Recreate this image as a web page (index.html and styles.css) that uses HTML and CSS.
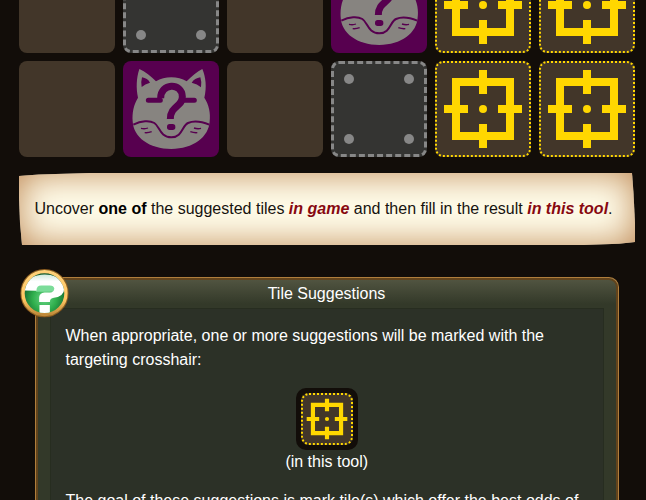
FILE: index.html
```
<!DOCTYPE html>
<html lang="en">
<head>
<meta charset="utf-8">
<title>Tile Suggestions</title>
<link rel="stylesheet" href="styles.css">
</head>
<body>
<svg class="defs" aria-hidden="true">
  <symbol id="crosshair" viewBox="0 0 96 96">
    <path fill="none" stroke="#ffd700" stroke-width="8" d="M21 21H75V75H21ZM48 9V33M48 63V87M9 48H33M63 48H87"/>
    <circle cx="48" cy="48" r="4" fill="#ffd700"/>
  </symbol>
  <symbol id="fox" viewBox="9 9 288 288">
    <path fill="#878480" d="M58 33C75 41 94 55 108 70C134 54 174 54 200 70C214 55 232 41 247 33C257 56 261 87 253 119C267 140 272 166 269 190C267 237 219 273 154 273C88 273 40 238 38 190C36 165 41 140 54 119C48 91 49 60 58 33Z"/>
    <path fill="#57004f" d="M66 58Q83 61 90 74Q75 78 65 87Q62 72 66 58ZM241 58Q224 61 215 74Q232 78 243 88Q246 73 241 58Z"/>
    <path fill="none" stroke="#57004f" stroke-width="15" stroke-linecap="round" d="M85 127H121M192 127H223"/>
    <path fill="none" stroke="#57004f" stroke-width="21" d="M122 121C121 75 186 72 187 116C188 146 151 143 151 183"/>
    <rect x="141" y="198" width="25" height="18" rx="8" fill="#57004f"/>
    <path fill="none" stroke="#57004f" stroke-width="6" d="M40 200C64 188 89 187 103 195C119 205 120 238 154 238C187 238 186 203 204 195C222 187 246 191 268 200"/>
    <path fill="none" stroke="#57004f" stroke-width="4" d="M63 211Q74 214 84 210M74 224Q85 225 95 221M222 210Q233 214 243 211M211 221Q222 225 232 224"/>
  </symbol>
</svg>

<main class="page">
  <div class="board">
    <div class="tile"></div>
    <div class="tile blocked"><i></i><i></i><i></i><i></i></div>
    <div class="tile"></div>
    <div class="tile fox"><svg><use href="#fox"/></svg></div>
    <div class="tile suggested"><svg><use href="#crosshair"/></svg></div>
    <div class="tile suggested"><svg><use href="#crosshair"/></svg></div>
    <div class="tile"></div>
    <div class="tile fox"><svg><use href="#fox"/></svg></div>
    <div class="tile"></div>
    <div class="tile blocked"><i></i><i></i><i></i><i></i></div>
    <div class="tile suggested"><svg><use href="#crosshair"/></svg></div>
    <div class="tile suggested"><svg><use href="#crosshair"/></svg></div>
  </div>

  <p class="parchment">Uncover <b>one of</b> the suggested tiles <em>in game</em> and then fill in the result <em>in this tool</em>.</p>

  <section class="panel">
    <svg class="badge" viewBox="29 26 146 146">
      <defs>
        <linearGradient id="ring" x1="0" y1="0" x2="0" y2="1">
          <stop offset="0" stop-color="#ffd078"/><stop offset=".65" stop-color="#ffc663"/><stop offset="1" stop-color="#c08a3a"/>
        </linearGradient>
        <radialGradient id="orb" cx=".5" cy=".62" r=".62">
          <stop offset="0" stop-color="#6ad688"/><stop offset=".45" stop-color="#2fae4c"/><stop offset="1" stop-color="#0b4a26"/>
        </radialGradient>
        <linearGradient id="gloss" x1="0" y1="0" x2="0" y2="1">
          <stop offset="0" stop-color="#cfe9dc"/><stop offset=".25" stop-color="#fff"/><stop offset="1" stop-color="#fff"/>
        </linearGradient>
        <clipPath id="disc"><circle cx="102" cy="98" r="59"/></clipPath>
      </defs>
      <circle cx="102" cy="98" r="70" fill="#0b4a26" stroke="#8d5d20" stroke-width="4"/>
      <circle cx="102" cy="98" r="64" fill="url(#orb)" stroke="url(#ring)" stroke-width="10"/>
      <g clip-path="url(#disc)">
        <path fill="#7bdc99" d="M77 73H132V94H77Z"/>
        <path fill="url(#gloss)" d="M40 90V72Q52 51 80 45Q112 39 136 49Q157 58 161 80Q162 107 130 112Q118 114 118 124H86V110Q87 98 102 96H118Q131 95 131 84Q130 75 118 75H92Q78 75 78 91Z"/>
        <path fill="#fff" d="M87 133H118V159H87Z"/>
      </g>
    </svg>
    <h2>Tile Suggestions</h2>
    <div class="content">
      <p>When appropriate, one or more suggestions will be marked with the targeting crosshair:</p>
      <figure>
        <div class="frame"><div class="mini suggested"><svg><use href="#crosshair"/></svg></div></div>
        <figcaption>(in this tool)</figcaption>
      </figure>
      <p>The goal of these suggestions is mark tile(s) which offer the best odds of</p>
    </div>
  </section>
</main>
</body>
</html>
```
FILE: styles.css
```
* { box-sizing: border-box; }
html, body { height: 100%; }
body {
  margin: 0;
  overflow: hidden;
  background: #120d09;
  color: #fff;
  font: 16px/24px "Liberation Sans", Arial, sans-serif;
}
.defs { position: absolute; width: 0; height: 0; }
.page { height: 500px; overflow: hidden; padding-left: 19px; }
.board {
  display: grid;
  grid-template-columns: repeat(6, 96px);
  gap: 8px;
  margin-top: -43px;
}
.tile {
  height: 96px;
  border-radius: 8px;
  background: #423629;
  overflow: hidden;
}
.tile svg { display: block; width: 96px; height: 96px; }
.fox { background: #57004f; }
.blocked {
  display: grid;
  grid-template-columns: 10px 10px;
  place-content: space-between;
  padding: 10px;
  border: 3px dashed #878787;
  background: #343432;
}
.blocked i { width: 10px; height: 10px; border-radius: 50%; background: #878787; }
.suggested { border: 2px dotted #ffd700; background: #423629; }
.tile.suggested svg { margin: -2px; }
.parchment {
  width: 616px;
  height: 72px;
  margin: 16px 0 0;
  padding: 24px 0 0 15.5px;
  white-space: nowrap;
  color: #17130f;
  background: #fffdeb;
  box-shadow: inset 0 0 36px #bd8550;
  clip-path: polygon(0 3px, 20px 1.5px, 70px 0, 613px 0, 614.5px 20px, 616px 50px, 616px 69px, 600px 70.8px, 565px 72px, 3px 72px, 1px 50px, 0 25px);
}
.parchment b { color: #000; }
.parchment em { color: #870810; font-weight: bold; }
.panel {
  position: relative;
  width: 584px;
  height: 300px;
  margin: 32px 0 0 16px;
  padding: 0 12px;
  border: 1px solid #b07e3c;
  border-bottom: 0;
  border-radius: 10px 10px 0 0;
  background: linear-gradient(#535642, #333929 26px, #333929);
  box-shadow: inset 0 0 0 2px #61431c;
}
.badge { position: absolute; left: -16.5px; top: -9.5px; width: 49px; height: 49px; }
.panel h2 {
  height: 30px;
  margin: 0;
  padding: 4px 1px 0 0;
  font-size: 16px;
  font-weight: normal;
  text-align: center;
}
.content {
  height: 270px;
  margin: 0 2px;
  padding: 15px 15px 0 14.5px;
  border: 1px solid #272d20;
  background: #2c3127;
}
.content p { margin: 0; }
figure {
  display: flex;
  flex-direction: column;
  align-items: center;
  margin: 16px 0 15px;
}
.frame { padding: 5px; border-radius: 10px; background: #120d09; }
.mini { width: 52px; height: 52px; border-radius: 8px; }
.mini svg { display: block; width: 50px; height: 50px; margin: -1px; }
```
